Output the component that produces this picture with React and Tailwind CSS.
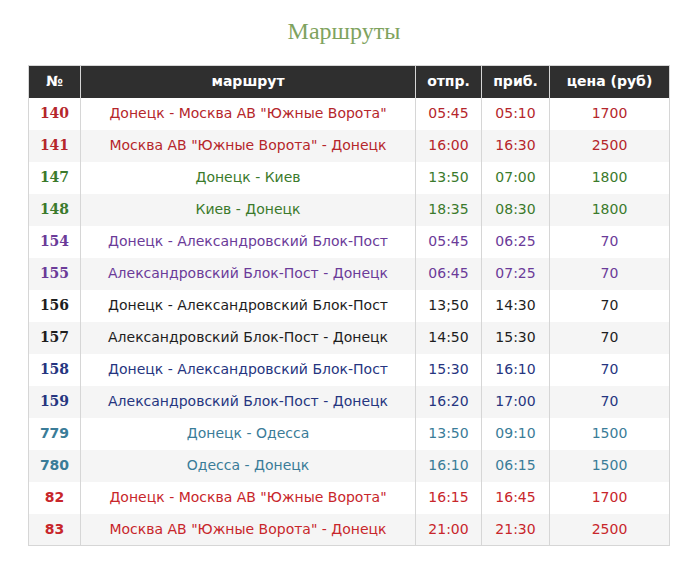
const rows = [
  ["140", "Донецк - Москва АВ \"Южные Ворота\"", "05:45", "05:10", "1700", "text-[#b5262b]", "serif"],
  ["141", "Москва АВ \"Южные Ворота\" - Донецк", "16:00", "16:30", "2500", "text-[#b5262b]", "serif"],
  ["147", "Донецк - Киев", "13:50", "07:00", "1800", "text-[#3b7a2c]", "serif"],
  ["148", "Киев - Донецк", "18:35", "08:30", "1800", "text-[#3b7a2c]", "serif"],
  ["154", "Донецк - Александровский Блок-Пост", "05:45", "06:25", "70", "text-[#6b3b99]", "serif"],
  ["155", "Александровский Блок-Пост - Донецк", "06:45", "07:25", "70", "text-[#6b3b99]", "serif"],
  ["156", "Донецк - Александровский Блок-Пост", "13;50", "14:30", "70", "text-[#1e1e1e]", "serif"],
  ["157", "Александровский Блок-Пост - Донецк", "14:50", "15:30", "70", "text-[#1e1e1e]", "serif"],
  ["158", "Донецк - Александровский Блок-Пост", "15:30", "16:10", "70", "text-[#263580]", "serif"],
  ["159", "Александровский Блок-Пост - Донецк", "16:20", "17:00", "70", "text-[#263580]", "serif"],
  ["779", "Донецк - Одесса", "13:50", "09:10", "1500", "text-[#3a7c98]", "sans"],
  ["780", "Одесса - Донецк", "16:10", "06:15", "1500", "text-[#3a7c98]", "sans"],
  ["82", "Донецк - Москва АВ \"Южные Ворота\"", "16:15", "16:45", "1700", "text-[#c8262b]", "sans"],
  ["83", "Москва АВ \"Южные Ворота\" - Донецк", "21:00", "21:30", "2500", "text-[#c8262b]", "sans"],
];

export default function App() {
  return (
    <div className="w-[688px] h-[580px] bg-white pt-[17px] font-['DejaVu_Sans',sans-serif]">
      <h1 className="text-center text-[24px] leading-[28px] text-[#7fa35e] font-['Liberation_Serif',serif]">
        Маршруты
      </h1>
      <table className="ml-[28px] mt-[20px] w-[641px] border-collapse border border-[#d6d6d6] table-fixed text-[14px]">
        <colgroup>
          <col className="w-[52px]" />
          <col className="w-[335px]" />
          <col className="w-[66px]" />
          <col className="w-[68px]" />
          <col className="w-[120px]" />
        </colgroup>
        <thead>
          <tr className="h-[32px] bg-[#2f2f2f] text-white">
            <th className="font-bold border-r border-[#d6d6d6]">№</th>
            <th className="font-bold border-r border-[#d6d6d6]">маршрут</th>
            <th className="font-bold border-r border-[#d6d6d6]">отпр.</th>
            <th className="font-bold border-r border-[#d6d6d6]">приб.</th>
            <th className="font-bold">цена (руб)</th>
          </tr>
        </thead>
        <tbody>
          {rows.map(([n, route, dep, arr, price, color, face], i) => (
            <tr key={n} className={`h-[32px] text-center ${color} ${i % 2 ? "bg-[#f5f5f5]" : "bg-white"}`}>
              <td
                className={`font-bold border-r border-[#d6d6d6] ${
                  face === "serif" ? "font-['DejaVu_Serif',serif] text-[14px]" : "text-[14px]"
                }`}
              >
                {n}
              </td>
              <td className="border-r border-[#d6d6d6] whitespace-nowrap">{route}</td>
              <td className="border-r border-[#d6d6d6]">{dep}</td>
              <td className="border-r border-[#d6d6d6]">{arr}</td>
              <td>{price}</td>
            </tr>
          ))}
        </tbody>
      </table>
    </div>
  );
}
